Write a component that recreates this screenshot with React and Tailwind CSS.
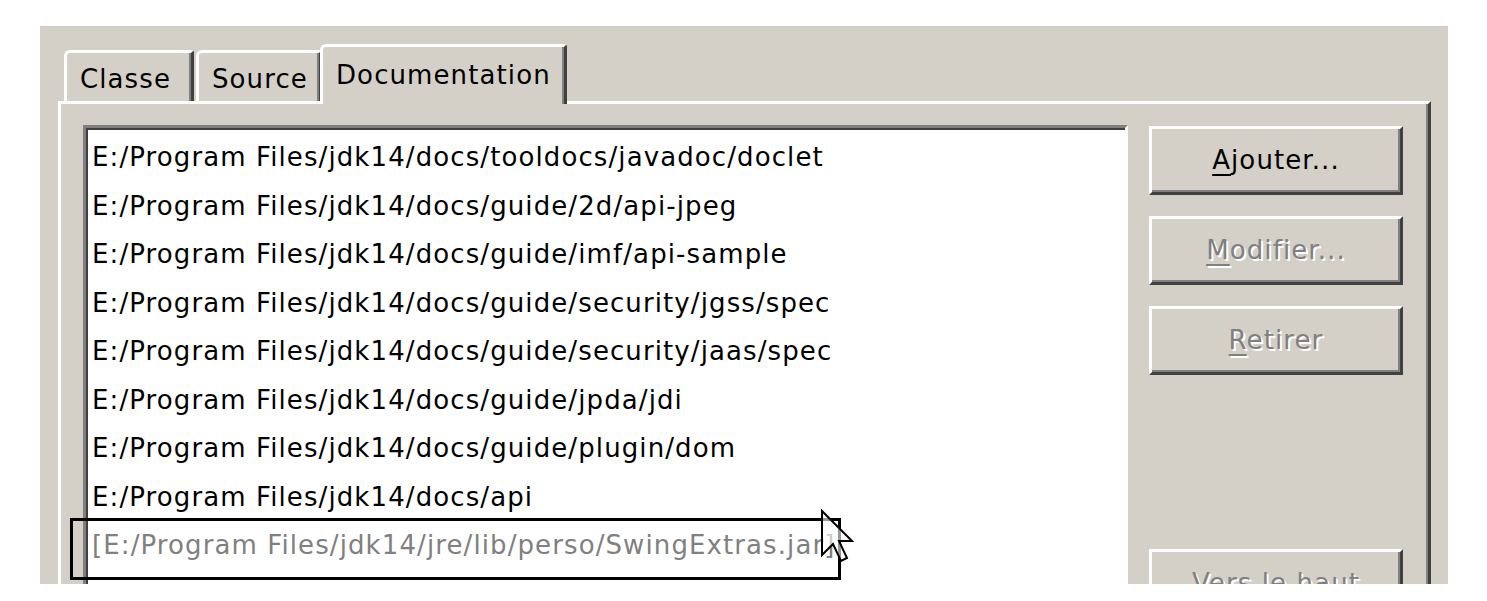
import React from 'react';

const entries = [
  'E:/Program Files/jdk14/docs/tooldocs/javadoc/doclet',
  'E:/Program Files/jdk14/docs/guide/2d/api-jpeg',
  'E:/Program Files/jdk14/docs/guide/imf/api-sample',
  'E:/Program Files/jdk14/docs/guide/security/jgss/spec',
  'E:/Program Files/jdk14/docs/guide/security/jaas/spec',
  'E:/Program Files/jdk14/docs/guide/jpda/jdi',
  'E:/Program Files/jdk14/docs/guide/plugin/dom',
  'E:/Program Files/jdk14/docs/api',
];

const Tab = ({ label, active, className }) => (
  <div
    className={`${className} shrink-0 bg-[#d4d0c8] border-t-[3px] border-l-[3px] border-r-[3px] border-t-white border-l-white border-r-[#404040] rounded-tl-[6px] rounded-tr-[3px] shadow-[inset_-2px_0_0_#808080] ${
      active ? 'h-[60px] relative z-10 pt-[9px] pl-[13px]' : 'h-[51px] mt-[6px] pt-[7px] pl-[13px]'
    }`}
  >
    <span className="leading-none">{label}</span>
  </div>
);

const WinButton = ({ children, disabled, className = '' }) => (
  <div
    className={`${className} h-[69px] w-full shrink-0 flex items-center justify-center bg-[#d4d0c8] border-[3px] border-t-white border-l-white border-r-[#404040] border-b-[#404040] shadow-[inset_-2px_-2px_0_#808080] ${
      disabled ? 'text-[#808080] [text-shadow:2px_2px_0_#ffffff]' : 'text-black'
    }`}
  >
    <span className="leading-none pb-[2px]">{children}</span>
  </div>
);

const App = () => {
  return (
    <div className="relative w-[1487px] h-[601px] bg-white overflow-hidden font-['DejaVu_Sans',sans-serif] text-[26px] tracking-[1.1px] text-black">
      <div className="ml-[40px] mt-[26px] w-[1408px] h-[558px] bg-[#d4d0c8] overflow-hidden pl-[18px] pt-[18px]">
        {/* tabs */}
        <div className="flex items-start h-[57px] pl-[6px]">
          <Tab label="Classe" className="w-[130px]" />
          <Tab label="Source" className="ml-[2px] w-[126px]" />
          <Tab label="Documentation" active className="-ml-[2px] w-[247px]" />
        </div>

        {/* panel */}
        <div className="w-[1373px] h-[620px] border-t-[3px] border-l-[3px] border-r-[3px] border-t-white border-l-white border-r-[#404040] shadow-[inset_-2px_0_0_#808080] pt-[21px] pl-[22px] flex">
          <div className="w-[1045px] h-[600px] shrink-0 bg-white border-t-[3px] border-l-[3px] border-r-[3px] border-t-[#808080] border-l-[#808080] border-r-white shadow-[inset_2px_2px_0_#404040] pt-[5px] pl-[6px]">
            {entries.map((p) => (
              <div key={p} className="h-[48.5px] flex items-center whitespace-nowrap leading-none">
                {p}
              </div>
            ))}
            <div className="h-[48.5px] flex items-center whitespace-nowrap leading-none text-[#808080]">
              [E:/Program Files/jdk14/jre/lib/perso/SwingExtras.jar]
            </div>
          </div>

          <div className="ml-[21px] w-[254px] shrink-0 flex flex-col pt-[1px]">
            <WinButton>
              <span className="underline underline-offset-[5px] decoration-2">A</span>jouter...
            </WinButton>
            <WinButton disabled className="mt-[21px]">
              <span className="underline underline-offset-[5px] decoration-2">M</span>odifier...
            </WinButton>
            <WinButton disabled className="mt-[21px]">
              <span className="underline underline-offset-[5px] decoration-2">R</span>etirer
            </WinButton>
            <WinButton disabled className="mt-[174px]">
              Vers le haut
            </WinButton>
          </div>
        </div>
      </div>

      {/* drag outline */}
      <div className="absolute left-[70px] top-[518px] w-[771px] h-[62px] border-[3px] border-black" />

      {/* cursor */}
      <svg className="absolute left-[820px] top-[509px]" width="36" height="56" viewBox="0 0 36 56">
        <path
          d="M2 2 L2 46 L13 35 L21 52 L27 49 L19 32 L32 32 Z"
          fill="white"
          fillOpacity="0.6"
          stroke="black"
          strokeWidth="2"
          strokeLinejoin="miter"
        />
      </svg>
    </div>
  );
};

export default App;
